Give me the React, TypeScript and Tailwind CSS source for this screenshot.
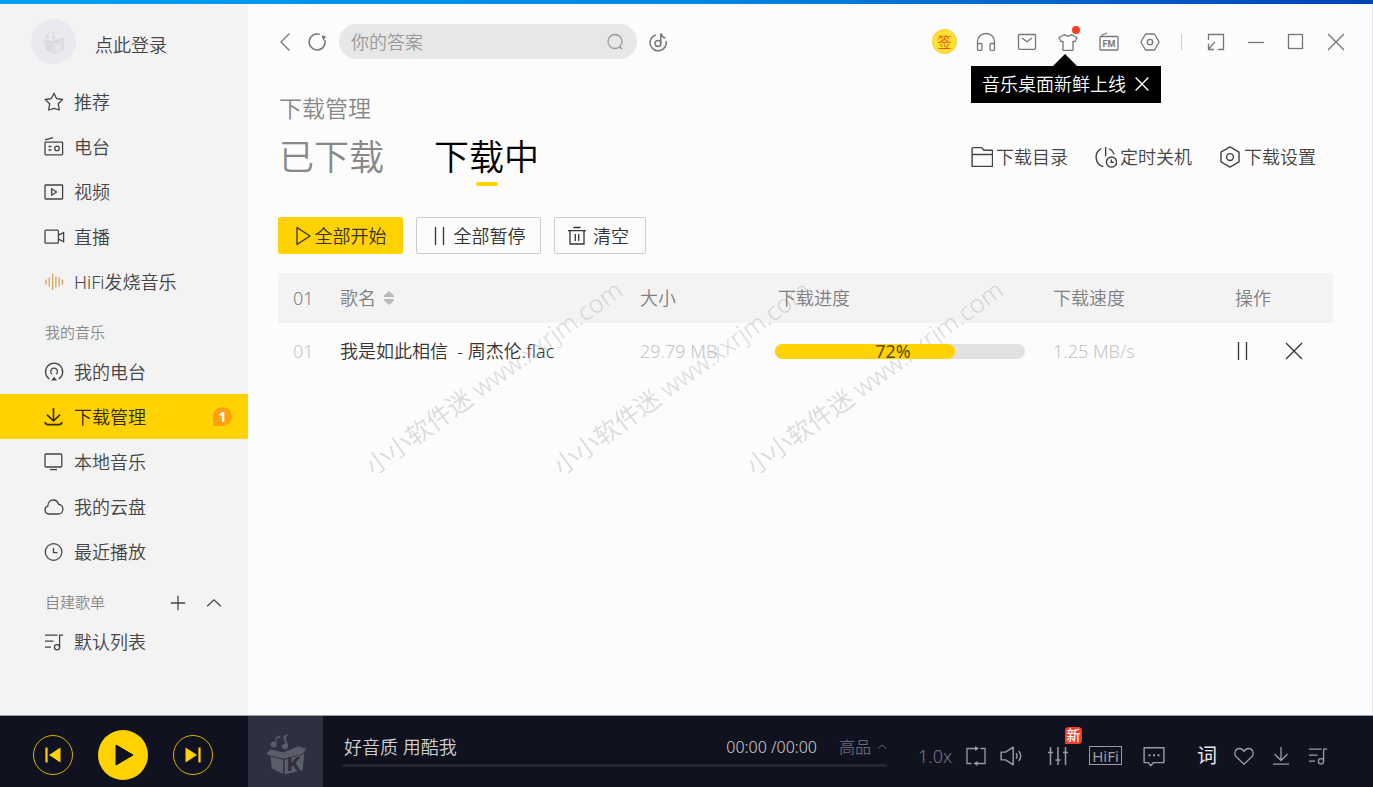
import { useState } from 'react'
import type { ReactNode } from 'react'

interface IconProps {
  className?: string
  children?: ReactNode
}

// Base for all the 20px line icons
function Icon({ className = 'size-5', children }: IconProps) {
  return (
    <svg viewBox="0 0 20 20" fill="none" stroke="currentColor" strokeWidth="1.3" className={`shrink-0 ${className}`} aria-hidden="true">
      {children}
    </svg>
  )
}

const StarIcon = () => (
  <Icon>
    <path strokeLinejoin="round" d="M10 1.2l2.6 5.5 6 .8-4.4 4.2 1.1 6.3-5.3-1.7L4.7 18l1-6.3L1.2 7.5l6.1-.8z" />
  </Icon>
)
const RadioIcon = () => (
  <Icon>
    <rect x="1" y="5.2" width="17.6" height="12.6" rx=".8" />
    <path d="M1 2.8L9 .6M4.5 9.5h3M4.5 13h3" />
    <circle cx="13" cy="11.4" r="2.3" />
  </Icon>
)
const VideoIcon = () => (
  <Icon>
    <rect x="1" y="3" width="17.6" height="14" rx=".8" />
    <path strokeLinejoin="round" d="M7.6 6.8v6.4l5-3.2z" />
  </Icon>
)
const LiveIcon = () => (
  <Icon className="size-5 overflow-visible">
    <rect x="1" y="3.2" width="13.4" height="13" rx="1" />
    <path d="M14.6 8.2l5-2.6v9.2l-5-2.6" />
  </Icon>
)
const WaveIcon = () => (
  <Icon className="size-5 text-[#d9a35c]">
    <path d="M2 7.5v5M5.3 5.5v9M8.6 2v16M11.9 4.5v11M15.2 5.5v9M18.4 7.5v5" />
  </Icon>
)
const PodcastIcon = () => (
  <Icon>
    <path d="M5.4 17A8.600 8.600 0 1 1 14.800 17" />
    <path d="M8 12.200a3.400 3.400 0 1 1 4.200 0" />
    <path d="M10.100 14.700l3 3.900h-6z" fill="currentColor" stroke="none" />
  </Icon>
)
const SideDownloadIcon = () => (
  <Icon>
    <path strokeWidth="1.600" d="M9.500 1v12.600M2.900 7.600L9.500 14l6.600-6.400M1 15c.4 1.700 1.400 2.600 3 2.600h11c1.600 0 2.600-.9 3-2.600" />
  </Icon>
)
const MonitorIcon = () => (
  <Icon>
    <rect x="1" y="2" width="16.800" height="13" rx="1" />
    <path d="M6 17.600h7" />
  </Icon>
)
const CloudIcon = () => (
  <Icon>
    <path d="M5.200 17a4 4 0 0 1-1.400-7.800C3.800 5.300 6.300 3 9.200 3c2.800 0 4.800 1.700 5.500 4.300 2.600.4 4.200 2.300 4.200 4.900 0 2.800-2 4.800-4.700 4.800z" />
  </Icon>
)
const ClockIcon = () => (
  <Icon>
    <circle cx="9.600" cy="10" r="8.300" />
    <path d="M9.500 6v4.600h4" />
  </Icon>
)
const PlaylistIcon = () => (
  <Icon>
    <path d="M1 3.200h12.500M1 9.200h8.500M1 15.200h6M15.600 15.300V3.200h3.600" />
    <circle cx="13" cy="15.300" r="2.600" />
  </Icon>
)
const FolderIcon = () => (
  <Icon className="size-[22px]">
    <path strokeLinejoin="round" d="M1 18.500V2.300c0-.5.300-.8.800-.8h8l2 2.400h7c.5 0 .8.300.8.800v13c0 .5-.3.800-.8.800zM1 7.800h18.600" />
  </Icon>
)
const TimerIcon = () => (
  <Icon className="size-[22px]">
    <path d="M5.600 2.300A9 9 0 0 0 7.600 18.800M9.700.8v8.600M13 2.400a9 9 0 0 1 4.600 5.200" />
    <circle cx="15" cy="14.600" r="4.600" />
    <path d="M14.800 12.200v2.600h2.400" />
  </Icon>
)
const HexIcon = () => (
  <Icon className="size-[22px]">
    <path strokeLinejoin="round" d="M10 .9l8.200 4.600v9L10 19.100l-8.200-4.600v-9z" />
    <circle cx="10" cy="10" r="3.100" />
  </Icon>
)
const TrashIcon = () => (
  <Icon>
    <path d="M1 4.600h18M6.500 1.500h7M3 4.600V18h14V4.600M8.300 8v7M11.700 8v7" />
  </Icon>
)
const PauseIcon = () => (
  <Icon>
    <path d="M5.500 1v18M13.500 1v18" />
  </Icon>
)
const CloseIcon = ({ className }: { className?: string }) => (
  <Icon className={className}>
    <path d="M2 2l16 16M18 2L2 18" />
  </Icon>
)

function BoxLogo({ className, cut }: { className: string; cut: string }) {
  return (
    <svg viewBox="0 0 42 44" className={className} fill="currentColor" aria-hidden="true">
      <circle cx="8" cy="12" r="3.200" />
      <circle cx="20" cy="14" r="3" />
      <path d="M10 12V4.500l5-1.500v2l-4 1.200V12zM21.500 14L18 4l4-3 .8 1.600L20.400 5l3 9z" />
      <path d="M5 17l13 3.500L34 14l8 2.500-3 5-20 5.500-15-3.500L0 22z" />
      <path d="M5 24.500l13 3.500v15L6 37zM19.500 28L40 22l-1.500 17-19 4.500z" />
      <text x="22" y="40" fontSize="20" fontWeight="800" fill={cut} fontFamily="Inter, sans-serif">K</text>
    </svg>
  )
}

const mainNav = [
  { label: '推荐', icon: <StarIcon /> },
  { label: '电台', icon: <RadioIcon /> },
  { label: '视频', icon: <VideoIcon /> },
  { label: '直播', icon: <LiveIcon /> },
  { label: 'HiFi发烧音乐', icon: <WaveIcon /> },
]

const myMusic = [
  { label: '我的电台', icon: <PodcastIcon /> },
  { label: '下载管理', icon: <SideDownloadIcon />, badge: 1 },
  { label: '本地音乐', icon: <MonitorIcon /> },
  { label: '我的云盘', icon: <CloudIcon /> },
  { label: '最近播放', icon: <ClockIcon /> },
]

const downloads = [
  { no: '01', name: '我是如此相信\u00a0 - 周杰伦.flac', size: '29.79 MB', progress: 72, speed: '1.25 MB/s' },
]

interface NavItemProps {
  label: string
  icon: ReactNode
  badge?: number
  active: boolean
  onSelect: (label: string) => void
}

function NavItem({ label, icon, badge, active, onSelect }: NavItemProps) {
  return (
    <button
      onClick={() => onSelect(label)}
      className={`flex h-[45px] w-full items-center gap-2.5 pr-4 pl-11 text-left text-lg ${
        active ? 'bg-[#ffd200] text-[#2f2a10]' : 'text-[#444]'
      }`}
    >
      {icon}
      <span>{label}</span>
      {badge && (
        <span className="ml-auto flex size-[19px] items-center justify-center rounded-full rounded-bl-none bg-[#ffa013] text-sm font-bold text-white">
          {badge}
        </span>
      )}
    </button>
  )
}

function Sidebar() {
  const [current, setCurrent] = useState('下载管理')

  return (
    <aside className="w-[248px] shrink-0 bg-[#f3f3f3]">
      <div className="flex h-[75px] items-center pl-[31px]">
        <div className="flex size-[45px] items-center justify-center rounded-full bg-[#e9eaef]">
          <BoxLogo className="size-6 text-[#dadbde]" cut="#e9eaef" />
        </div>
        <button className="mt-1.5 ml-[19px] text-lg text-[#444]">点此登录</button>
      </div>

      <nav>
        {mainNav.map((item) => (
          <NavItem key={item.label} {...item} active={current === item.label} onSelect={setCurrent} />
        ))}
        <h2 className="flex h-[45px] items-center pt-3 pl-[45px] text-[15px] text-[#888]">我的音乐</h2>
        {myMusic.map((item) => (
          <NavItem key={item.label} {...item} active={current === item.label} onSelect={setCurrent} />
        ))}
        <div className="flex h-[45px] items-center pt-3 pr-[26px] pl-[45px] text-[#444]">
          <h2 className="text-[15px] text-[#888]">自建歌单</h2>
          <button aria-label="新建歌单" className="ml-auto">
            <Icon className="size-4">
              <path d="M10 1v18M1 10h18" strokeWidth="1.600" />
            </Icon>
          </button>
          <button aria-label="收起" className="ml-5">
            <Icon className="size-4">
              <path d="M1.500 14L10 6l8.500 8" strokeWidth="1.600" />
            </Icon>
          </button>
        </div>
        <NavItem label="默认列表" icon={<PlaylistIcon />} active={current === '默认列表'} onSelect={setCurrent} />
      </nav>
    </aside>
  )
}

function TopBar() {
  const [showTip, setShowTip] = useState(true)

  return (
    <header className="flex h-[75px] items-center pr-4 pl-[27px] text-[#777]">
      <button aria-label="后退">
        <Icon>
          <path d="M14.500 1.500L6 10l8.500 8.500" />
        </Icon>
      </button>
      <button aria-label="刷新" className="ml-3">
        <Icon>
          <path strokeWidth="1.500" d="M12.800 2.400A8 8 0 1 0 17.900 8" />
          <path d="M14.500 3.300l4.600 1.200-2.800 4.300z" fill="currentColor" stroke="none" />
        </Icon>
      </button>
      <div className="ml-3 flex h-[35px] w-[298px] items-center rounded-full bg-[#e7e7e7] px-3 text-[#999]">
        <input
          type="text"
          aria-label="搜索"
          placeholder="你的答案"
          className="min-w-0 flex-1 bg-transparent text-lg text-[#555] outline-none placeholder:text-[#999]"
        />
        <button aria-label="搜索">
          <Icon>
            <circle cx="10" cy="9.500" r="7" />
            <path d="M14.500 14.500l2.500 2.500" />
          </Icon>
        </button>
      </div>
      <button aria-label="听歌识曲" className="ml-[11px]">
        <Icon>
          <path strokeWidth="1.500" d="M7.800 3A8.100 8.100 0 1 0 18.100 9M12.800 11.500V1.500c.5 2.500 2 3.600 4.600 4.600" />
          <circle cx="10" cy="11.500" r="2.900" strokeWidth="1.500" />
        </Icon>
      </button>

      <div className="ml-auto flex items-center *:flex *:w-[41px] *:items-center *:justify-center">
        <button>
          <span className="flex size-[25px] items-center justify-center rounded-full border border-[#ffc52e] bg-[#ffe232] text-sm font-normal text-[#f0590c]">签</span>
        </button>
        <button aria-label="客服">
          <Icon>
            <path d="M1.500 12.500V9.500a8.500 8 0 0 1 17 0v3" />
            <rect x="1.500" y="11.500" width="4.500" height="6.800" rx="1" />
            <rect x="14" y="11.500" width="4.500" height="6.800" rx="1" />
          </Icon>
        </button>
        <button aria-label="消息">
          <Icon>
            <rect x="1.500" y="2.500" width="17" height="14.800" rx=".8" />
            <path d="M5 6l5 3.800L15 6" />
          </Icon>
        </button>
        <div className="relative">
          <button aria-label="皮肤" className="relative">
            <Icon>
              <path strokeLinejoin="round" d="M6.500 2.500L1 5.500l2 4h2v8.800h10V9.500h2l2-4-5.500-3c-1.700 2-5.300 2-7 0z" />
            </Icon>
            <span className="absolute -top-1.5 -right-0.5 size-2 rounded-full bg-[#ff3b22]" />
          </button>
          {showTip && (
            <div className="absolute top-[22px] -left-[76px] z-20 flex w-max flex-col">
              <div className="ml-[82px] border-x-12 border-b-12 border-x-transparent border-b-black" />
              <div className="absolute top-3 left-0 flex h-[37px] items-center gap-2 bg-black px-[11px] text-lg whitespace-nowrap text-white">
                音乐桌面新鲜上线
                <button aria-label="关闭提示" onClick={() => setShowTip(false)}>
                  <CloseIcon className="size-4 stroke-[1.800]" />
                </button>
              </div>
            </div>
          )}
        </div>
        <button aria-label="FM 电台">
          <Icon className="size-5 overflow-visible">
            <rect x="1" y="4.500" width="18" height="13.500" rx="1" />
            <path d="M2 3.500L8 1" />
            <text x="10" y="14.800" textAnchor="middle" fontSize="9" fontWeight="700" fill="currentColor" stroke="none" fontFamily="Roboto, sans-serif">FM</text>
          </Icon>
        </button>
        <button aria-label="设置">
          <Icon>
            <path strokeLinejoin="round" d="M5.500 2h9l4.600 8-4.600 8h-9L.9 10z" />
            <circle cx="10" cy="10" r="2.700" />
          </Icon>
        </button>
      </div>
      <div className="mr-3.5 ml-[11px] h-4 w-px bg-[#ccc]" />
      <div className="flex items-center *:flex *:w-10 *:justify-center">
        <button aria-label="迷你模式">
          <Icon>
            <path d="M2.500 8V2.500h15v15H12M9 10l-6.500 7M2.500 11.500v6H8" />
          </Icon>
        </button>
        <button aria-label="最小化">
          <Icon>
            <path d="M2 10.500h16" />
          </Icon>
        </button>
        <button aria-label="最大化">
          <Icon>
            <rect x="2.500" y="2.500" width="14" height="14" />
          </Icon>
        </button>
        <button aria-label="关闭">
          <CloseIcon />
        </button>
      </div>
    </header>
  )
}

function Watermark() {
  return (
    <div aria-hidden="true" className="pointer-events-none absolute inset-0 overflow-hidden text-[25px] leading-8 whitespace-nowrap text-[#888]/30">
      <span className="absolute top-[445px] left-[129px] origin-bottom-left -rotate-36">小小软件迷 www.xxrjm.com</span>
      <span className="absolute top-[445px] left-[317px] origin-bottom-left -rotate-36">小小软件迷 www.xxrjm.com</span>
      <span className="absolute top-[445px] left-[510px] origin-bottom-left -rotate-36">小小软件迷 www.xxrjm.com</span>
    </div>
  )
}

function DownloadTable() {
  return (
    <table className="mt-[19px] w-full table-fixed text-left text-lg">
      <colgroup>
        <col className="w-[62px]" />
        <col />
        <col className="w-[135px]" />
        <col className="w-[278px]" />
        <col className="w-[182px]" />
        <col className="w-[98px]" />
      </colgroup>
      <thead className="bg-[#f3f3f3] text-[#808080]">
        <tr className="h-[50px] *:font-[350]">
          <th className="pl-[15px]">01</th>
          <th>
            <button className="flex items-center gap-2">
              歌名
              <svg viewBox="0 0 10 14" className="h-3.5 w-2.5" fill="#bbb" aria-hidden="true">
                <path d="M5 0l5 4.500V6H0V4.500zM5 14l5-4.500V8H0v1.500z" />
              </svg>
            </button>
          </th>
          <th>大小</th>
          <th className="pl-[3px]">下载进度</th>
          <th>下载速度</th>
          <th>操作</th>
        </tr>
      </thead>
      <tbody>
        {downloads.map((item) => (
          <tr key={item.no} className="h-14 text-[#c4c4c4]">
            <td className="pl-[15px]">{item.no}</td>
            <td className="text-[#333]">{item.name}</td>
            <td>{item.size}</td>
            <td>
              <div
                role="progressbar"
                aria-label="下载进度"
                aria-valuenow={item.progress}
                className="relative z-10 flex h-[15px] w-[250px] items-center justify-center rounded-full bg-[#e1e1e1] pr-3.5"
              >
                <div className="absolute inset-y-0 left-0 rounded-full bg-[#ffd200]" style={{ width: `${item.progress}%` }} />
                <span className="relative text-lg leading-4 font-normal text-[#5a4d0c]">{item.progress}%</span>
              </div>
            </td>
            <td>{item.speed}</td>
            <td>
              <div className="-ml-0.5 flex items-center gap-[31px] text-[#333]">
                <button aria-label="暂停">
                  <PauseIcon />
                </button>
                <button aria-label="取消">
                  <CloseIcon />
                </button>
              </div>
            </td>
          </tr>
        ))}
      </tbody>
    </table>
  )
}

function Downloads() {
  const [tab, setTab] = useState('下载中')

  return (
    <section className="pt-[13px] pr-[39px] pl-[30px]">
      <h1 className="pl-px text-[23px] leading-8 text-[#888]">下载管理</h1>
      <div className="mt-2 flex items-center justify-between">
        <div className="flex gap-[50px] pl-px text-[35px] leading-[50px]">
          {['已下载', '下载中'].map((name) => (
            <button key={name} onClick={() => setTab(name)} className={`flex flex-col items-center ${tab === name ? 'text-black' : 'text-[#888]'}`}>
              {name}
              <span className={`h-1 w-[22px] rounded-full ${tab === name ? 'bg-[#ffd200]' : 'bg-transparent'}`} />
            </button>
          ))}
        </div>
        <div className="flex items-center gap-[27px] pr-[17px] pb-1 text-lg text-[#444] *:flex *:items-center *:gap-[3px]">
          <button>
            <FolderIcon />
            下载目录
          </button>
          <button>
            <TimerIcon />
            定时关机
          </button>
          <button>
            <HexIcon />
            下载设置
          </button>
        </div>
      </div>

      <div className="mt-[31px] flex gap-[13px] text-lg text-[#333] *:flex *:h-[37px] *:items-center *:justify-center *:rounded-xs">
        <button className="w-[125px] gap-0.5 bg-[#ffd200] pr-0.5">
          <Icon>
            <path strokeLinejoin="round" d="M4 1.500v17L17 10z" />
          </Icon>
          全部开始
        </button>
        <button className="w-[125px] gap-1 border border-[#ccc] pr-0.5">
          <PauseIcon />
          全部暂停
        </button>
        <button className="w-[92px] gap-1.5 border border-[#ccc] pr-1">
          <TrashIcon />
          清空
        </button>
      </div>

      <DownloadTable />
    </section>
  )
}

function Player() {
  return (
    <footer className="flex h-[72px] shrink-0 border-t border-[#9a9fa3] bg-[#10121f] text-[#9a9ba3]">
      <div className="flex w-[248px] shrink-0 items-center gap-[25px] pt-1.5 pl-[33px] text-[#ffd200]">
        <button aria-label="上一首" className="flex size-10 items-center justify-center rounded-full border border-[#d9b300]">
          <Icon>
            <path d="M3.500 2.500v15" strokeWidth="2.200" />
            <path d="M17.500 2.500v15L6 10z" fill="currentColor" stroke="none" />
          </Icon>
        </button>
        <button aria-label="播放" className="flex size-[50px] items-center justify-center rounded-full bg-[#ffd200]">
          <svg viewBox="0 0 24 24" className="ml-1 size-6" fill="#10121f" aria-hidden="true">
            <path strokeLinejoin="round" stroke="#10121f" d="M3 2v20l17-10z" />
          </svg>
        </button>
        <button aria-label="下一首" className="flex size-10 items-center justify-center rounded-full border border-[#d9b300]">
          <Icon>
            <path d="M16.500 2.500v15" strokeWidth="2.200" />
            <path d="M2.500 2.500v15L14 10z" fill="currentColor" stroke="none" />
          </Icon>
        </button>
      </div>
      <div className="flex w-[75px] shrink-0 items-center justify-center bg-[#2e303f]">
        <BoxLogo className="mt-1 size-[42px] text-[#5c5d6a]" cut="#2e303f" />
      </div>

      <div className="flex min-w-0 flex-1 flex-col pt-[17px] pl-[19px]">
        <div className="flex items-center pl-0.5">
          <span className="text-lg text-[#d0d0d3]">好音质 用酷我</span>
          <span className="ml-auto text-base text-[#d0d0d3]">00:00 /00:00</span>
          <button className="ml-[22px] flex items-center gap-1.5 text-base text-[#666873]">
            高品
            <Icon className="size-2.5">
              <path d="M2 13l8-7 8 7" strokeWidth="2" />
            </Icon>
          </button>
        </div>
        <input
          type="range"
          aria-label="播放进度"
          defaultValue={0}
          className="mt-[3px] h-[3px] w-full appearance-none rounded-full bg-[#242632] [&::-webkit-slider-thumb]:size-0 [&::-webkit-slider-thumb]:appearance-none"
        />
      </div>

      <div className="flex shrink-0 items-center pt-2 pr-[45px] pl-[31px]">
        <div className="flex items-center gap-3.5">
          <button className="text-lg text-[#777983]">1.0x</button>
          <button aria-label="循环播放">
            <Icon>
              <path d="M5.500 17.500H1v-15h9M14.500 2.500H19v15h-9" />
              <path d="M9 0l4 2.500L9 5zM11.500 20l-4-2.500 4-2.500z" fill="currentColor" stroke="none" />
            </Icon>
          </button>
          <button aria-label="音量">
            <Icon className="size-[22px]">
              <path strokeLinejoin="round" d="M1 6.500v7h4L12 18V2L5 6.500z" />
              <path d="M14.500 7.500c1.300 1.500 1.300 3.500 0 5M17 5.500c2.400 2.600 2.400 6.400 0 9" />
            </Icon>
          </button>
        </div>
        <div className="ml-[26px] flex items-center gap-[21px]">
          <button aria-label="音效" className="relative">
            <Icon>
              <path strokeWidth="1.500" d="M2.500 1v18M10 1v18M17.500 1v18M0 6.500h5M7.500 14h5M15 6.500h5" />
            </Icon>
            <span className="absolute -top-[19px] left-[17px] flex size-[17px] items-center justify-center rounded-sm rounded-bl-none bg-[#fb3a2c] text-sm leading-4 font-medium text-white">新</span>
          </button>
          <button className="flex h-[19px] w-[33px] items-center justify-center border border-[#9a9ba3] text-[15px] leading-4 font-normal">HiFi</button>
          <button aria-label="评论">
            <Icon className="size-[22px]">
              <path strokeLinejoin="round" d="M1 2.500h18v13.500H9.500L7 18.800 4.800 16H1z" />
              <path strokeWidth="1.800" d="M5 9.300h1.800M9.100 9.300h1.800M13.200 9.300H15" />
            </Icon>
          </button>
        </div>
        <div className="ml-8 flex items-center gap-[17px]">
          <button className="text-xl font-normal text-[#e8e8ea]">词</button>
          <button aria-label="收藏">
            <Icon>
              <path strokeLinejoin="round" d="M10 18.300L2 10.500C-.5 7.500 1.300 2.500 5.300 2.500 7.500 2.500 9.200 3.800 10 5.500c.8-1.700 2.500-3 4.700-3 4 0 5.800 5 3.300 8z" />
            </Icon>
          </button>
          <button aria-label="下载">
            <Icon>
              <path d="M10 1v13.500M3.500 8l6.500 6.500L16.500 8M2 18.200h16" />
            </Icon>
          </button>
          <button aria-label="播放列表">
            <PlaylistIcon />
          </button>
        </div>
      </div>
    </footer>
  )
}

export default function App() {
  return (
    <div className="flex min-h-screen flex-col font-['Noto_Sans','Noto_Sans_CJK_SC',sans-serif] font-[350]">
      <div className="h-1 shrink-0 bg-linear-to-r from-[#00a0f2] via-[#0088e0] to-[#0044b4]" />
      <div className="flex flex-1">
        <Sidebar />
        <main className="relative min-w-0 flex-1 border-r border-[#dbe6f4] bg-[#fcfcfc]">
          <TopBar />
          <Downloads />
          <Watermark />
        </main>
      </div>
      <Player />
    </div>
  )
}
